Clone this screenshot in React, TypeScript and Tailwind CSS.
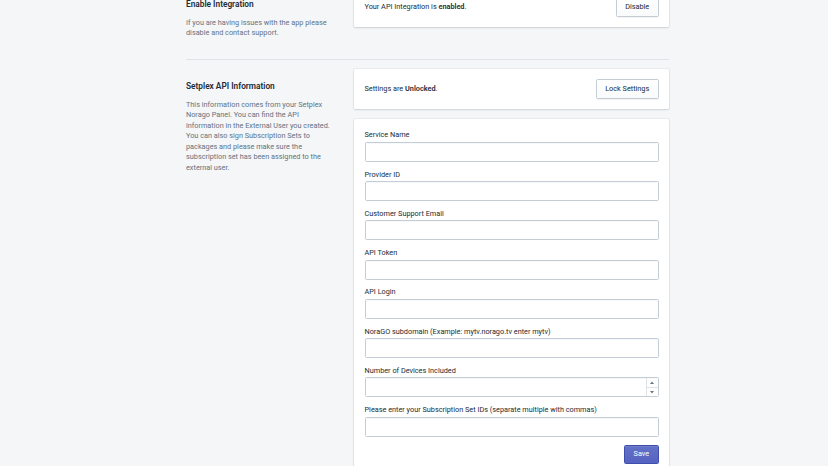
import React from "react";

const fields = [
  "Service Name",
  "Provider ID",
  "Customer Support Email",
  "API Token",
  "API Login",
  "NoraGO subdomain (Example: mytv.norago.tv enter mytv)",
];

function Card({ children, className = "" }: { children: React.ReactNode; className?: string }) {
  return (
    <div
      className={
        "bg-white rounded-[1.5px] shadow-[0_0_0_1px_rgba(63,63,68,0.05),0_1px_2px_0_rgba(63,63,68,0.15)] " +
        className
      }
    >
      {children}
    </div>
  );
}

function Button({ children }: { children: React.ReactNode }) {
  return (
    <button className="h-[19.5px] px-[8.3px] rounded-[1.5px] border border-[#c4cdd5] bg-gradient-to-b from-white to-[#f9fafb] text-[7.3px] leading-[10px] text-[#212b36] shadow-[0_1px_0_0_rgba(22,29,37,0.05)]">
      {children}
    </button>
  );
}

function Field({ label, number = false }: { label: string; number?: boolean }) {
  return (
    <div className="flex flex-col">
      <div className="text-[7.3px] leading-[10.4px] text-[#212b36] mb-[1px]">{label}</div>
      <div className="relative h-[20px] rounded-[1.5px] border border-[#c4cdd5] bg-white shadow-[inset_0_1px_0_0_rgba(99,115,129,0.05)]">
        {number && (
          <div className="absolute right-0 top-0 bottom-0 w-[12px] border-l border-[#dfe3e8] flex flex-col">
            <div className="flex-1 flex items-center justify-center border-b border-[#dfe3e8]">
              <svg width="4" height="3" viewBox="0 0 4 3">
                <path d="M0 3 L2 0.5 L4 3 Z" fill="#637381" />
              </svg>
            </div>
            <div className="flex-1 flex items-center justify-center">
              <svg width="4" height="3" viewBox="0 0 4 3">
                <path d="M0 0 L2 2.5 L4 0 Z" fill="#637381" />
              </svg>
            </div>
          </div>
        )}
      </div>
    </div>
  );
}

export default function App() {
  return (
    <div
      className="min-h-[466px] h-[466px] overflow-hidden bg-[#f4f6f8] text-[#212b36]"
      style={{ fontFamily: "Roboto, 'Liberation Sans', sans-serif" }}
    >
      <div className="ml-[186px] w-[483px] -mt-[13px]">
        {/* Section 1 */}
        <div className="flex gap-[16px] items-start">
          <div className="w-[152px] shrink-0 pt-[11px]">
            <div className="text-[8.3px] leading-[12.5px] font-semibold text-[#212b36]">Enable Integration</div>
            <div className="mt-[7px] text-[7.3px] leading-[10.5px] text-[#637381]">
              If you are having issues with the app please disable and contact support.
            </div>
          </div>
          <Card className="flex-1 px-[10.5px] py-[10.4px] flex items-center justify-between">
            <div className="text-[7.3px] leading-[10.4px]">
              Your API Integration is <span className="font-semibold">enabled</span>.
            </div>
            <Button>Disable</Button>
          </Card>
        </div>

        <div className="mt-[20px] border-t border-[#dfe3e8]" />

        {/* Section 2 */}
        <div className="flex gap-[16px] items-start pt-[9.5px]">
          <div className="w-[152px] shrink-0 pt-[11px]">
            <div className="text-[8.3px] leading-[12.5px] font-semibold text-[#212b36]">Setplex API Information</div>
            <div className="mt-[7px] text-[7.3px] leading-[10.5px] text-[#637381]">
              This information comes from your Setplex Norago Panel. You can find the API information in the
              External User you created. You can also sign Subscription Sets to packages and please make sure the
              subscription set has been assigned to the external user.
            </div>
          </div>
          <div className="flex-1 flex flex-col gap-[10px]">
            <Card className="px-[10.5px] py-[10.4px] flex items-center justify-between">
              <div className="text-[7.3px] leading-[10.4px]">
                Settings are <span className="font-semibold">Unlocked</span>.
              </div>
              <Button>Lock Settings</Button>
            </Card>
            <Card className="px-[10.5px] pt-[11px] pb-[10.4px] flex flex-col gap-[7.9px]">
              {fields.map((f) => (
                <Field key={f} label={f} />
              ))}
              <Field label="Number of Devices Included" number />
              <Field label="Please enter your Subscription Set IDs (separate multiple with commas)" />
              <div className="flex justify-end">
                <button className="h-[19.5px] px-[8.3px] rounded-[1.5px] border border-[#3f4eae] bg-gradient-to-b from-[#6371c7] to-[#5563c1] text-[7.3px] leading-[10px] text-white shadow-[inset_0_1px_0_0_#6f7bcb]">
                  Save
                </button>
              </div>
            </Card>
          </div>
        </div>
      </div>
    </div>
  );
}
